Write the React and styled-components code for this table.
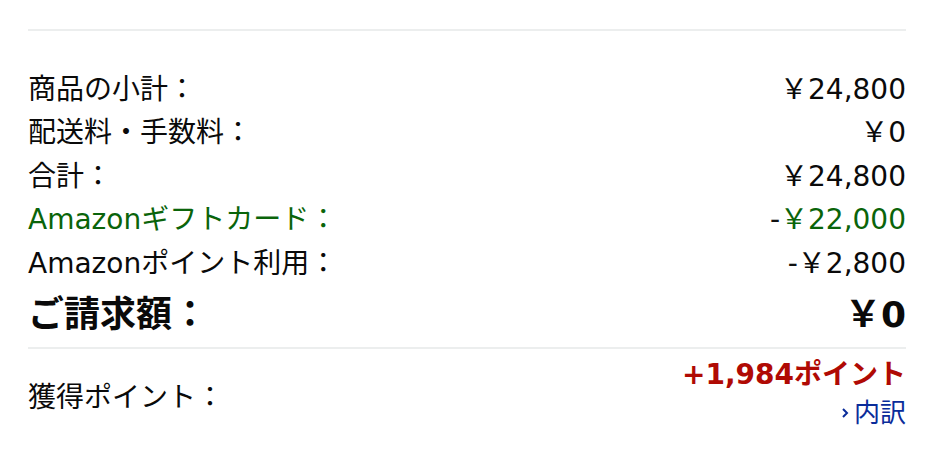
import styled, { createGlobalStyle } from "styled-components";

const GlobalStyle = createGlobalStyle`
  html, body {
    margin: 0;
    padding: 0;
    background: #ffffff;
  }
  body {
    font-family: "DejaVu Sans", "Noto Sans CJK JP", sans-serif;
    color: #0f1111;
  }
`;

const Summary = styled.div`
  width: 878px;
  padding: 29px 36px 0 28px;
`;

const Divider = styled.hr`
  margin: 0;
  border: 0;
  border-top: 2px solid #eceeee;
`;

const Lines = styled.div`
  display: flex;
  flex-direction: column;
  padding-top: 34px;
  padding-bottom: 8px;
`;

const Row = styled.div`
  display: flex;
  justify-content: space-between;
  align-items: center;
  height: ${(p) => (p.$big ? "56px" : "43.5px")};
  font-size: ${(p) => (p.$big ? "36px" : "28px")};
  font-weight: ${(p) => (p.$big ? 700 : 400)};
  color: ${(p) => p.$color || "#0a0a0a"};
  white-space: nowrap;
`;

const Label = styled.span``;

const Amount = styled.span`
  text-align: right;
`;

const Minus = styled.span`
  color: #0f1111;
`;

const PointsRow = styled.div`
  display: flex;
  justify-content: space-between;
  align-items: center;
  padding-top: 8px;
  font-size: 28px;
  color: #0a0a0a;
`;

const PointsSide = styled.div`
  display: flex;
  flex-direction: column;
  align-items: flex-end;
`;

const Earned = styled.span`
  color: #b00a04;
  font-weight: 700;
  line-height: 36px;
`;

const Breakdown = styled.a`
  color: #0a2c9a;
  font-size: 26px;
  line-height: 40px;
  text-decoration: none;
  display: flex;
  align-items: center;
  gap: 4px;
`;

const Chevron = styled.svg`
  width: 10px;
  height: 14px;
`;

const rows = [
  { label: "商品の小計：", amount: "￥24,800" },
  { label: "配送料・手数料：", amount: "￥0" },
  { label: "合計：", amount: "￥24,800" },
  { label: "Amazonギフトカード：", amount: "￥22,000", minus: true, color: "#0a640a" },
  { label: "Amazonポイント利用：", amount: "￥2,800", minus: true },
];

export default function App() {
  return (
    <>
      <GlobalStyle />
      <Summary>
        <Divider />
        <Lines>
          {rows.map((r) => (
            <Row key={r.label} $color={r.color}>
              <Label>{r.label}</Label>
              <Amount>
                {r.minus && <Minus>-</Minus>}
                {r.amount}
              </Amount>
            </Row>
          ))}
          <Row $big>
            <Label>ご請求額：</Label>
            <Amount>￥0</Amount>
          </Row>
        </Lines>
        <Divider />
        <PointsRow>
          <Label>獲得ポイント：</Label>
          <PointsSide>
            <Earned>+1,984ポイント</Earned>
            <Breakdown href="#">
              <Chevron viewBox="0 0 10 14">
                <path d="M3 3l4 4-4 4" fill="none" stroke="currentColor" strokeWidth="2" />
              </Chevron>
              内訳
            </Breakdown>
          </PointsSide>
        </PointsRow>
      </Summary>
    </>
  );
}
